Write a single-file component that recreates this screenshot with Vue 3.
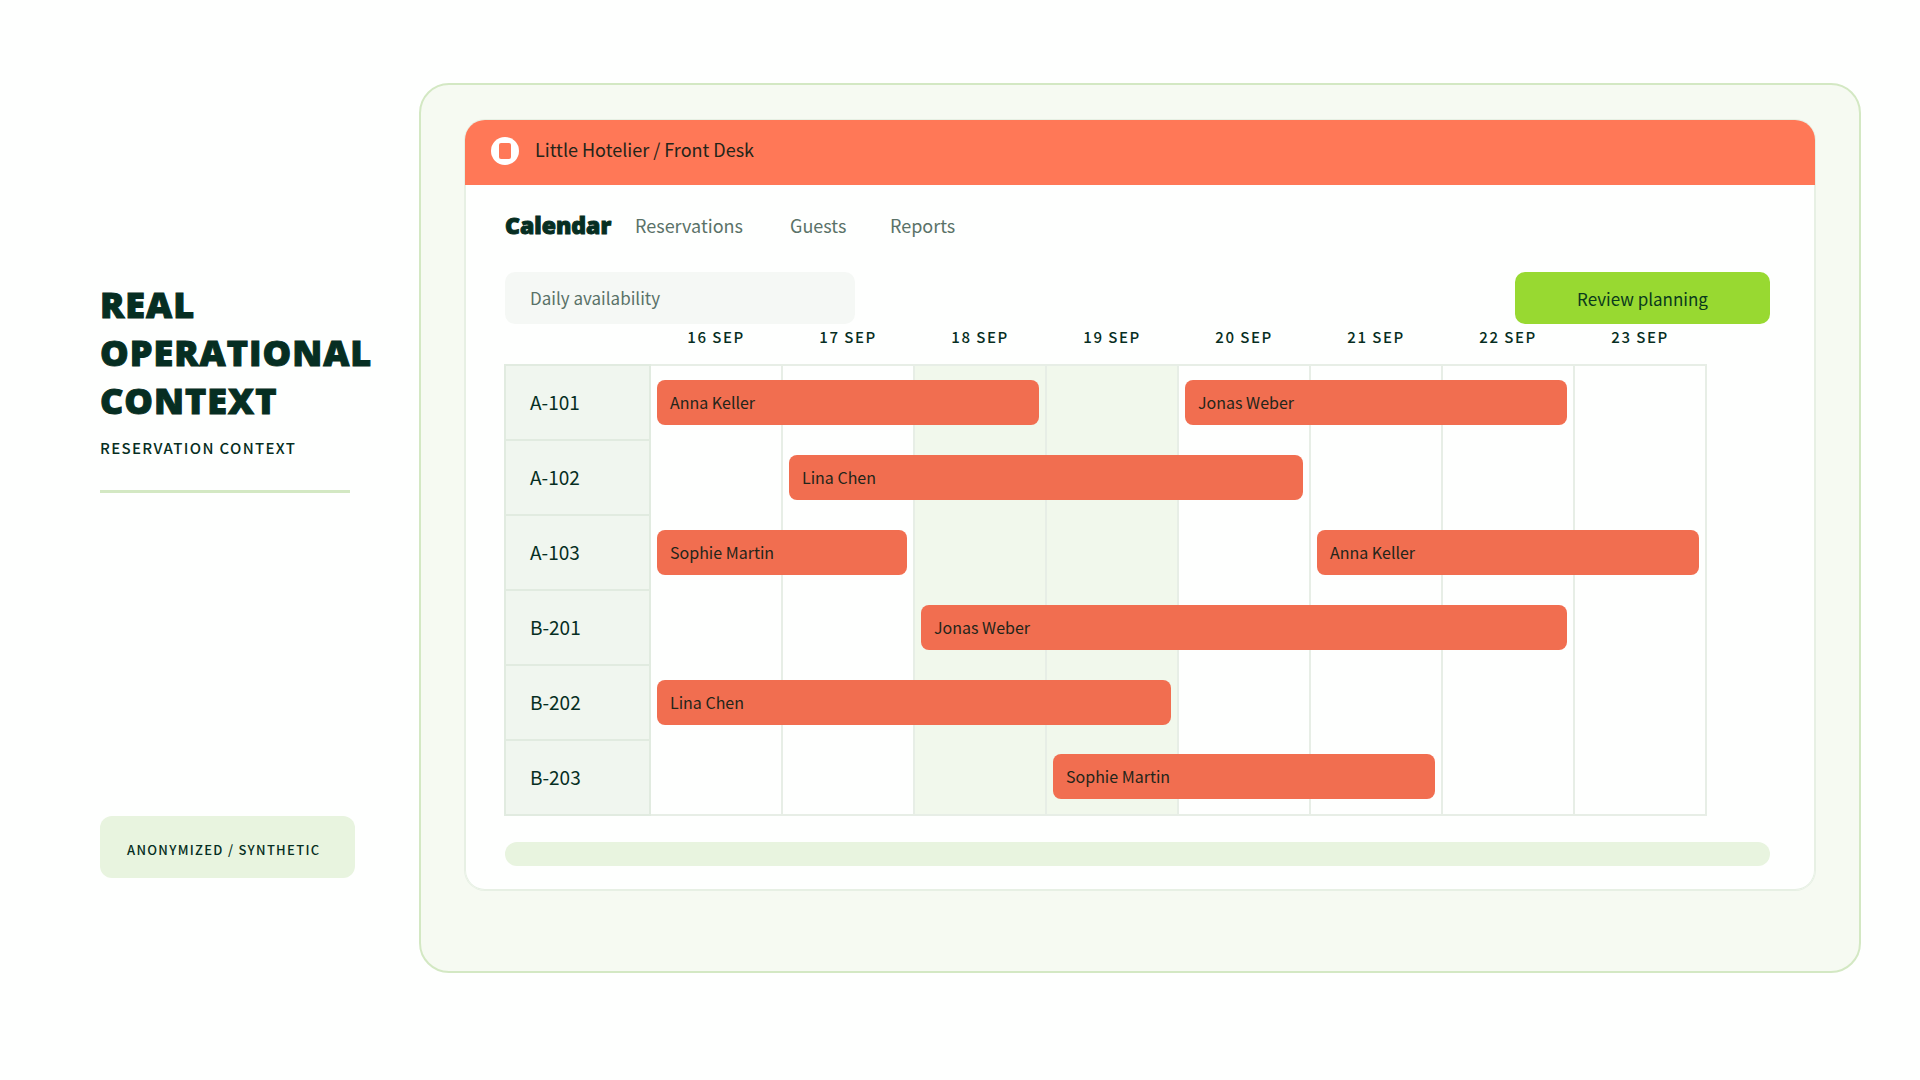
<script setup>
import { ref } from 'vue'

const view = ref('Daily availability')
const days = [16, 17, 18, 19, 20, 21, 22, 23]
const highlighted = [18, 19]
const rooms = [
  { name: 'A-101', stays: { 16: ['Anna Keller', 3], 20: ['Jonas Weber', 3] } },
  { name: 'A-102', stays: { 17: ['Lina Chen', 4] } },
  { name: 'A-103', stays: { 16: ['Sophie Martin', 2], 21: ['Anna Keller', 3] } },
  { name: 'B-201', stays: { 18: ['Jonas Weber', 5] } },
  { name: 'B-202', stays: { 16: ['Lina Chen', 4] } },
  { name: 'B-203', stays: { 19: ['Sophie Martin', 3] } },
]
// A stay covers whole day columns, less the gutter on both sides.
const stayWidth = (nights) => ({ width: `calc(${nights} * (100% + 2px) - 14px)` })
</script>

<template>
  <main class="page">
    <aside class="intro">
      <h1>Real<br />operational<br />context</h1>
      <p class="subtitle">RESERVATION CONTEXT</p>
      <hr />
      <p class="badge">ANONYMIZED / SYNTHETIC</p>
    </aside>

    <section class="panel">
      <div class="card">
        <header class="topbar">
          <svg class="logo" viewBox="0 0 28 28" aria-hidden="true">
            <circle cx="14" cy="14" r="14" fill="#fff" />
            <rect x="8" y="6" width="12" height="16" rx="2" fill="#ff7857" />
          </svg>
          <span class="product">Little Hotelier / Front Desk</span>
        </header>

        <div class="body">
          <nav class="tabs">
            <a href="#calendar" class="current" aria-current="page">Calendar</a>
            <a href="#reservations">Reservations</a>
            <a href="#guests">Guests</a>
            <a href="#reports">Reports</a>
          </nav>

          <div class="tools">
            <input v-model="view" type="text" aria-label="View" />
            <button type="button">Review planning</button>
          </div>

          <div class="schedule">
            <table>
              <colgroup>
                <col class="room-col" />
                <col v-for="day in days" :key="day" />
              </colgroup>
              <thead>
                <tr>
                  <td></td>
                  <th v-for="day in days" :key="day" scope="col">{{ day }} SEP</th>
                </tr>
              </thead>
              <tbody>
                <tr v-for="room in rooms" :key="room.name">
                  <th scope="row">{{ room.name }}</th>
                  <td v-for="day in days" :key="day" :class="{ highlighted: highlighted.includes(day) }">
                    <div v-if="room.stays[day]" class="stay" :style="stayWidth(room.stays[day][1])">
                      {{ room.stays[day][0] }}
                    </div>
                  </td>
                </tr>
              </tbody>
            </table>
          </div>

          <div class="track"></div>
        </div>
      </div>
    </section>
  </main>
</template>

<style>
body {
  margin: 0;
  background: #fefffe;
}
</style>

<style scoped>
.page {
  display: flex;
  padding: 83px 59px 83px 100px;
  color: #062e22;
  font-family: "Noto Sans CJK SC", "Noto Sans", sans-serif;
  font-size: 18px;
  line-height: 24px;
}

.page * {
  box-sizing: border-box;
}

.intro {
  display: flex;
  flex: 0 0 319px;
  flex-direction: column;
  align-items: flex-start;
  padding: 198px 0 95px;
}

h1 {
  margin: 0;
  font-family: "Open Sans", sans-serif;
  font-size: 36px;
  font-weight: 800;
  letter-spacing: 1px;
  line-height: 48px;
  text-transform: uppercase;
  -webkit-text-stroke: 1px #062e22;
}

.subtitle {
  margin: 11px 0 30px;
  font-size: 15px;
  font-weight: 500;
  letter-spacing: 0.09em;
}

hr {
  width: 250px;
  height: 3px;
  margin: 0;
  border: 0;
  background: #d3e8c3;
}

.badge {
  width: 255px;
  margin: auto 0 0;
  padding: 22px 27px 16px;
  border-radius: 12px;
  background: #e8f4df;
  font-size: 13px;
  font-weight: 500;
  letter-spacing: 0.1em;
  white-space: nowrap;
}

.panel {
  flex: 1;
  min-width: 0;
  padding: 35px 44px 81px;
  border: 2px solid #d3e8c3;
  border-radius: 30px;
  background: #f6faf2;
}

.card {
  border-radius: 20px;
  background: #fefffe;
  box-shadow: 0 0 0 1px #e7f0e4, inset 0 0 0 1px #e7f0e4;
}

.topbar {
  display: flex;
  align-items: center;
  gap: 16px;
  height: 65px;
  padding: 0 26px;
  border-radius: 20px 20px 0 0;
  background: #ff7857;
  color: #23251a;
}

.logo {
  width: 28px;
  height: 28px;
  margin-top: -3px;
}

.product {
  padding-bottom: 8px;
}

.body {
  padding: 26px 45px 24px 40px;
}

.tabs {
  display: grid;
  grid-template-columns: 130px 155px 100px 100px;
  align-items: center;
  height: 28px;
}

.tabs a {
  color: #5a7268;
  text-decoration: none;
}

.tabs .current {
  color: #062e22;
  font-family: "Open Sans", sans-serif;
  font-size: 23px;
  font-weight: 800;
  -webkit-text-stroke: 1px #062e22;
}

.tools {
  display: flex;
  justify-content: space-between;
  margin-top: 33px;
}

input,
button {
  height: 52px;
  border: 0;
  border-radius: 10px;
  font: inherit;
  font-size: 17px;
}

input {
  width: 350px;
  padding: 0 25px 1px;
  background: #f5f8f5;
  color: #5a7268;
}

button {
  width: 255px;
  padding: 2px 0 0;
  background: #98d931;
  color: #0a3a1c;
}

.schedule {
  margin: 0 63px 0 -1px;
}

table {
  width: 100%;
  table-layout: fixed;
  border-collapse: collapse;
}

.room-col {
  width: 145px;
}

thead th {
  height: 41px;
  padding: 0 0 14px;
  font-size: 15px;
  font-weight: 500;
  letter-spacing: 0.1em;
}

tbody {
  border: 2px solid #e7eee6;
}

tbody th {
  height: 75px;
  padding: 0 0 2px 24px;
  border: 2px solid #e1ebe0;
  background: #f0f6ef;
  font-size: 19px;
  font-weight: 400;
  text-align: left;
}

tbody td {
  position: relative;
  padding: 0;
  border-right: 2px solid #e7eee6;
}

.highlighted {
  background: #f1f8ec;
}

.stay {
  position: absolute;
  z-index: 1;
  top: 50%;
  left: 6px;
  height: 45px;
  margin-top: -23px;
  padding: 0 13px;
  border-radius: 8px;
  background: #f16e50;
  color: #23251a;
  font-size: 16px;
  line-height: 45px;
  white-space: nowrap;
}

.track {
  height: 24px;
  margin-top: 26px;
  border-radius: 12px;
  background: #e8f4df;
}
</style>
